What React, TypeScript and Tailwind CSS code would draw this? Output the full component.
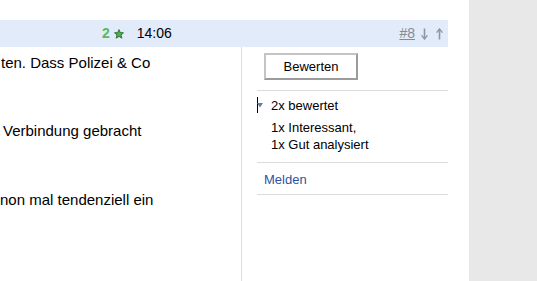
import React from 'react';

// small green star used next to the rating count
const Star: React.FC = () => (
  <svg width="10" height="10" viewBox="0 0 10 10" className="mx-[4px]">
    <polygon
      points="5,0.6 6.3,3.6 9.5,3.8 7,5.9 7.9,9.2 5,7.4 2.1,9.2 3,5.9 0.5,3.8 3.7,3.6"
      fill="#4caf50"
      stroke="#2e6b2e"
      strokeWidth="0.9"
      strokeLinejoin="round"
    />
  </svg>
);

const Arrow: React.FC<{ up?: boolean }> = ({ up }) => (
  <svg width="7" height="12" viewBox="0 0 7 12" className={up ? 'rotate-180' : ''}>
    <path d="M3.5 0.5 V10.5" stroke="#8c96a8" strokeWidth="1.6" />
    <path d="M0.6 7.4 L3.5 11 L6.4 7.4" fill="none" stroke="#8c96a8" strokeWidth="1.4" />
  </svg>
);

const App: React.FC = () => {
  return (
    <div className="flex w-[537px] h-[281px] bg-white overflow-hidden font-['Liberation_Sans',Arial,sans-serif] text-black">
      <div className="w-[469px] flex flex-col pt-[20px]">
        {/* post header */}
        <div className="w-[448px] h-[27px] bg-[#e2ebf9] flex items-center text-[14px] leading-[27px]">
          <div className="flex items-center ml-[102px]">
            <span className="font-bold text-[#5cb85c]">2</span>
            <Star />
            <span className="ml-[9px]">14:06</span>
          </div>
          <div className="ml-auto mr-[5px] flex items-center">
            <span className="text-[#8a8a8a] underline mr-[6px]">#8</span>
            <Arrow />
            <span className="w-[8px]" />
            <Arrow up />
          </div>
        </div>

        <div className="flex flex-1">
          {/* post text */}
          <div className="w-[241px] text-[15px] leading-[20px] whitespace-nowrap overflow-hidden">
            <p className="mt-[6px] pl-[1px]">ten. Dass Polizei &amp; Co</p>
            <p className="mt-[48px] pl-[3px]">Verbindung gebracht</p>
            <p className="mt-[49px]">non mal tendenziell ein</p>
          </div>

          {/* sidebar */}
          <div className="w-[207px] border-l border-[#dcdcdc] pl-[15px] text-[13px] leading-[17px]">
            <div className="pt-[6px] pb-[10px] border-b border-[#dcdcdc]">
              <button className="ml-[7px] w-[94px] h-[27px] bg-white border-2 border-t-[#c4c4c4] border-l-[#c4c4c4] border-b-[#9c9c9c] border-r-[#9c9c9c] text-[13px]">
                Bewerten
              </button>
            </div>
            <div className="pt-[6px] pb-[9px] border-b border-[#dcdcdc]">
              <div className="flex items-start h-[17px]">
                <span className="block w-px h-[16px] bg-black" />
                <svg width="6" height="5" viewBox="0 0 6 5" className="mt-[6px] ml-[-1px]">
                  <polygon points="0,0 6,0 3,4.5" fill="#5a7fa8" />
                </svg>
                <span className="ml-[8px]">2x bewertet</span>
              </div>
              <div className="pl-[14px] mt-[5px]">
                <div>1x Interessant,</div>
                <div>1x Gut analysiert</div>
              </div>
            </div>
            <div className="pt-[8px] pb-[6px] border-b border-[#dcdcdc] pl-[7px]">
              <span className="text-[#2f52a0]">Melden</span>
            </div>
          </div>
        </div>
      </div>
      <div className="flex-1 bg-[#e8e8e8]" />
    </div>
  );
};

export default App;
